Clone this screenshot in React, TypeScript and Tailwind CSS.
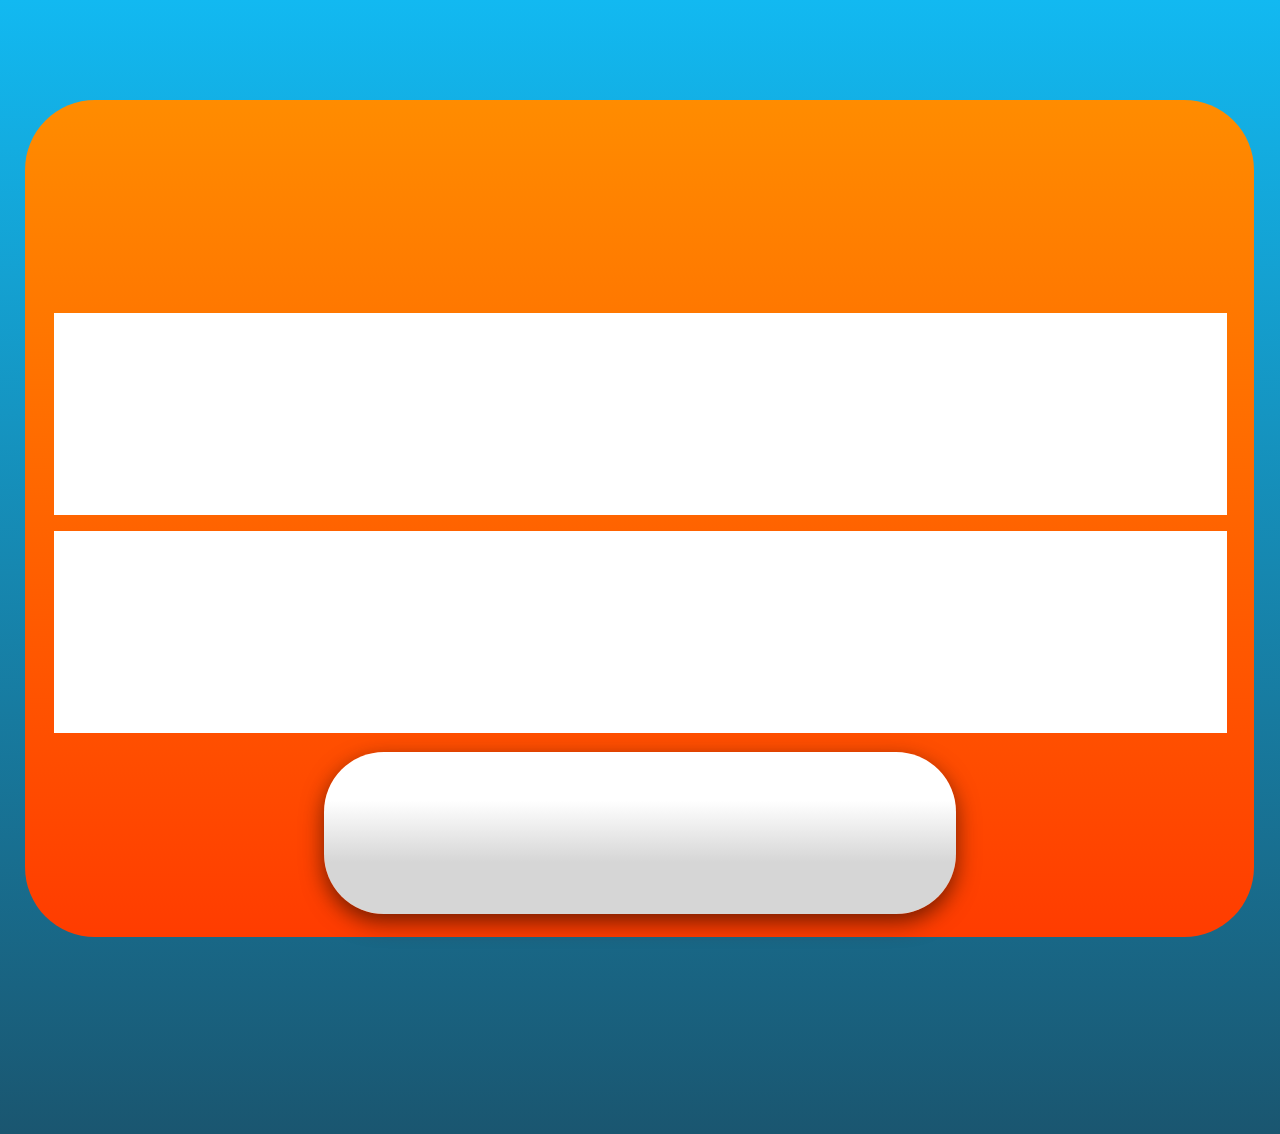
export default function App() {
  return (
    <div className="min-h-[1134px] w-full bg-linear-to-b/srgb from-[#12b9f1] to-[#1a5670] pt-[100px] pl-[25px]">
      <div className="flex h-[837px] w-[1229px] flex-col rounded-[70px] bg-linear-to-b/srgb from-[#ff8c00] to-[#ff3c00] pl-[29px] pr-[27px] pt-[213px]">
        <div className="flex flex-col gap-[16px]">
          <div className="h-[202px] bg-white" />
          <div className="h-[202px] bg-white" />
        </div>
        <button className="ml-[270px] mt-[19px] h-[162px] w-[632px] rounded-[60px] bg-linear-to-b/srgb from-white from-30% to-[#d6d6d6] to-68% shadow-[0_8px_22px_rgba(80,20,0,0.8)]" />
      </div>
    </div>
  )
}
